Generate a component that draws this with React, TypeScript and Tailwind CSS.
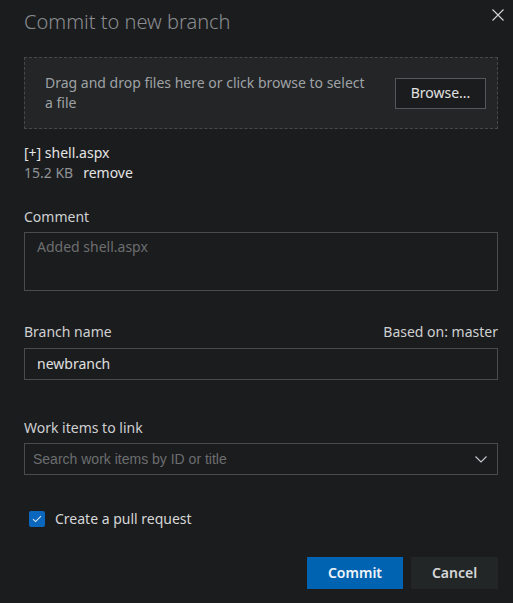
import React from 'react';

const font = { fontFamily: '"Noto Sans", "Open Sans", sans-serif' };

export default function App() {
  return (
    <div
      className="relative h-[603px] w-[513px] overflow-hidden bg-[#1b1c1e] pl-6 pr-[15px] pt-2 text-[14px] leading-5 text-[#cfd0d1]"
      style={font}
    >
      {/* close */}
      <button className="absolute right-[9px] top-[9px] text-[#d4d4d4]">
        <svg width="12" height="12" viewBox="0 0 12 12" fill="none" stroke="currentColor" strokeWidth="1.1">
          <path d="M0.5 0.5 L11.5 11.5 M11.5 0.5 L0.5 11.5" />
        </svg>
      </button>

      <h1 className="text-[20px] font-light leading-7 text-[#8a8d90]">Commit to new branch</h1>

      {/* drop zone */}
      <div className="mt-[21px] flex h-[72px] items-center border border-dashed border-[#46484a] bg-[#232527] pl-5 pr-[11px]">
        <p className="w-[325px] text-[#9fa2a5]">Drag and drop files here or click browse to select a file</p>
        <button className="ml-auto h-[31px] w-[91px] border border-[#55575a] bg-[#1b1c1e] text-[#e3e3e3]">
          Browse...
        </button>
      </div>

      {/* file */}
      <div className="mt-[14px]">
        <div className="text-[#e4e4e4]">[+] shell.aspx</div>
        <div className="flex gap-[10px]">
          <span className="text-[#8f9295]">15.2 KB</span>
          <span className="text-[#e4e4e4]">remove</span>
        </div>
      </div>

      {/* comment */}
      <label className="mt-6 block">Comment</label>
      <div className="mt-[5px] h-[59px] border border-[#4a4b4d] px-3 pt-1 text-[#6c6e70]">Added shell.aspx</div>

      {/* branch */}
      <div className="mt-[31px] flex justify-between">
        <span>Branch name</span>
        <span>Based on: master</span>
      </div>
      <div className="mt-[6px] flex h-[32px] items-center border border-[#4a4b4d] px-3 text-[#e0e0e0]">newbranch</div>

      {/* work items */}
      <label className="mt-[38px] block">Work items to link</label>
      <div className="mt-[5px] flex h-[32px] items-center border border-[#4a4b4d] pl-2 pr-[10px]">
        <span className="text-[#6c6e70]" style={{ fontFamily: '"Liberation Sans", Arial, sans-serif' }}>
          Search work items by ID or title
        </span>
        <svg className="ml-auto" width="12" height="7" viewBox="0 0 12 7" fill="none" stroke="#c8ccd0" strokeWidth="1.1">
          <path d="M0.5 0.5 L6 6 L11.5 0.5" />
        </svg>
      </div>

      {/* checkbox */}
      <div className="mt-[34px] flex items-center pl-[5px]">
        <span className="flex h-4 w-4 items-center justify-center rounded-[2px] bg-[#0b67bd]">
          <svg width="10" height="8" viewBox="0 0 10 8" fill="none" stroke="#dbe8f5" strokeWidth="1.1">
            <path d="M1 4.2 L3.6 6.6 L9 1.2" />
          </svg>
        </span>
        <span className="ml-[10px] text-[#d6d7d8]">Create a pull request</span>
      </div>

      {/* actions */}
      <div className="mt-[28px] flex justify-end gap-2">
        <button className="h-8 w-[96px] bg-[#0063b1] font-semibold text-[#f0f4f8]">Commit</button>
        <button className="h-8 w-[87px] bg-[#232627] font-semibold text-[#d6d7d8]">Cancel</button>
      </div>
    </div>
  );
}
